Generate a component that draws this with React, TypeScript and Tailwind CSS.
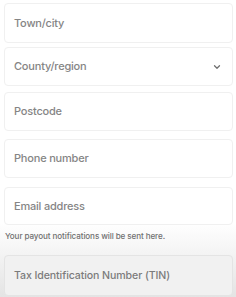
import { ChevronDown } from 'lucide-react';

const fields = [
  { label: 'Town/city', mt: 'mt-[3px]', h: 'h-[40px]' },
  { label: 'County/region', mt: 'mt-[4px]', h: 'h-[39px]', select: true },
  { label: 'Postcode', mt: 'mt-[6px]', h: 'h-[39px]' },
  { label: 'Phone number', mt: 'mt-[8px]', h: 'h-[39px]' },
  { label: 'Email address', mt: 'mt-[9px]', h: 'h-[38px]' },
];

export default function App() {
  return (
    <div
      className="w-[236px] h-[297px] overflow-hidden bg-gradient-to-b from-white from-[75%] to-[#e4e4e4] flex flex-col pl-[4px] pr-[3px]"
      style={{ fontFamily: 'Inter, "Noto Sans", sans-serif' }}
    >
      {fields.map((f) => (
        <div
          key={f.label}
          className={`${f.mt} ${f.h} flex items-center justify-between rounded-[4px] border border-[#f0f0f0] bg-white pl-[9px] pr-[10px]`}
        >
          <span className="text-[11px] font-medium text-[#858585] tracking-[-0.2px]">{f.label}</span>
          {f.select && <ChevronDown className="w-[10px] h-[10px] text-[#707070]" strokeWidth={3} />}
        </div>
      ))}
      <div className="mt-[5px] pl-[1px] text-[8.1px] font-medium text-[#707070] tracking-[-0.1px]">Your payout notifications will be sent here.</div>
      <div className="mt-[13px] h-[41px] flex items-center rounded-[4px] border border-[#e4e4e4] bg-[#f1f1f1] pl-[9px]">
        <span className="text-[10.6px] font-medium text-[#7c7c7c] tracking-[-0.1px]">Tax Identification Number (TIN)</span>
      </div>
    </div>
  );
}
